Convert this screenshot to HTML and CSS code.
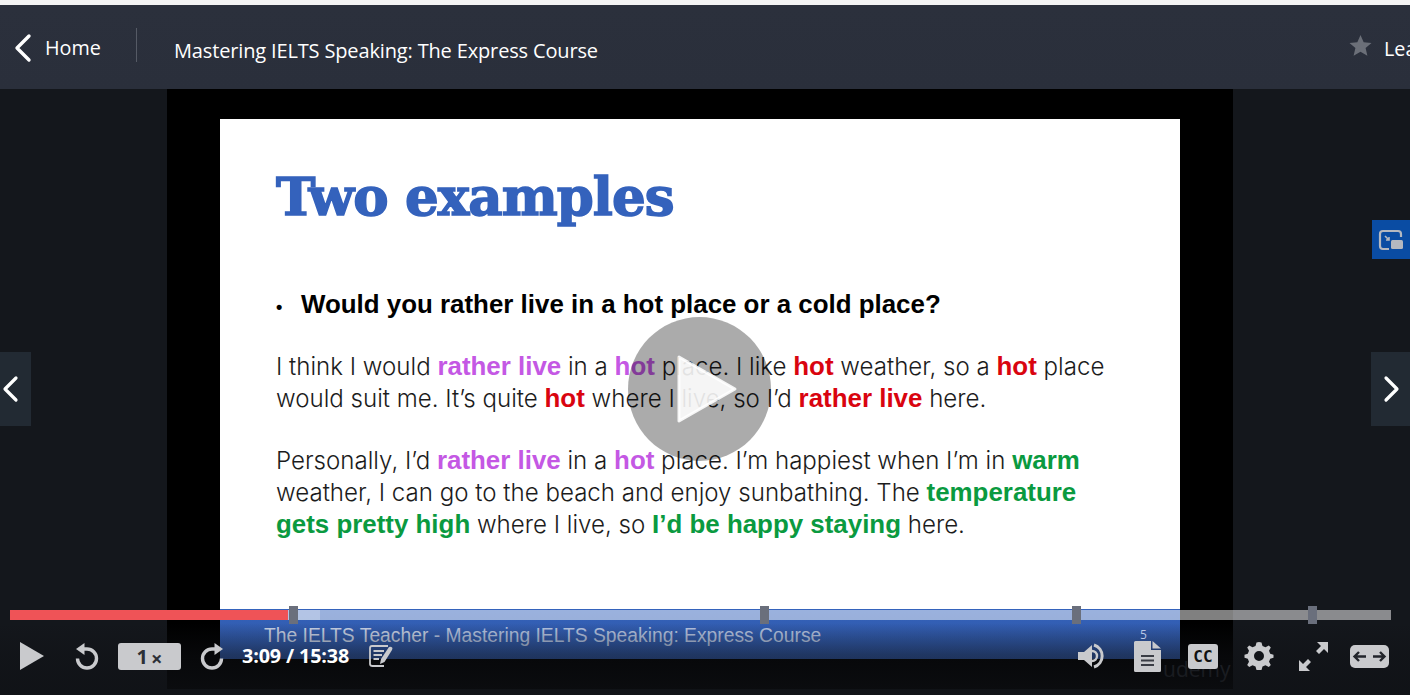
FILE: index.html
```html
<!DOCTYPE html>
<html lang="en">
<head>
    <meta charset="UTF-8">
    <meta name="viewport" content="width=device-width, initial-scale=1.0">
    <title>Mastering IELTS Speaking: The Express Course</title>
    <link rel="stylesheet" href="styles.css">
</head>
<body>

    <div class="top-strip"></div>

    <div class="header">
        <a class="home-link">
            <svg class="back-icon" width="20" height="30" viewBox="0 0 20 30"><path d="M16 3 L4 15 L16 27" fill="none" stroke="#fff" stroke-width="3.4" stroke-linecap="round" stroke-linejoin="round"/></svg>
            <span>Home</span>
        </a>
        <div class="divider"></div>
        <div class="course-title">Mastering IELTS Speaking: The Express Course</div>
        <div class="header-right">
            <svg class="star-icon" width="23" height="23" viewBox="0 0 24 24"><path d="M12 1 L15.3 8.6 L23.5 9.3 L17.3 14.7 L19.2 22.8 L12 18.5 L4.8 22.8 L6.7 14.7 L0.5 9.3 L8.700 8.6 Z" fill="#6b6f78"/></svg>
            <span class="leave-text">Lea</span>
        </div>
    </div>

    <div class="player">
        <div class="video">
            <div class="slide">
                <div class="slide-body">
                    <h1 class="slide-title">Two examples</h1>
                    <p class="question"><span class="dot">•</span>Would you rather live in a hot place or a cold place?</p>
                    <p class="para">
                        <span class="line">I think I would <b class="purple">rather live</b> in a <b class="purple">hot</b> place. I like <b class="red">hot</b> weather, so a <b class="red">hot</b> place</span>
                        <span class="line">would suit me. It’s quite <b class="red">hot</b> where I live, so I’d <b class="red">rather live</b> here.</span>
                    </p>
                    <p class="para para-second">
                        <span class="line">Personally, I’d <b class="purple">rather live</b> in a <b class="purple">hot</b> place. I’m happiest when I’m in <b class="green">warm</b></span>
                        <span class="line">weather, I can go to the beach and enjoy sunbathing. The <b class="green">temperature</b></span>
                        <span class="line"><b class="green">gets pretty high</b> where I live, so <b class="green">I’d be happy staying</b> here.</span>
                    </p>
                </div>
                <div class="slide-footer">The IELTS Teacher <span class="footer-dim">- Mastering IELTS Speaking: Express Course</span></div>
            </div>
        </div>

        <div class="big-play">
            <svg width="62" height="70" viewBox="0 0 62 70"><path d="M3 3 L59 35 L3 67 Z" fill="#fff" fill-opacity="0.88" stroke="#fff" stroke-opacity="0.88" stroke-width="3" stroke-linejoin="round"/></svg>
        </div>

        <div class="side-nav side-prev">
            <svg width="20" height="30" viewBox="0 0 20 30"><path d="M16 4 L5 15 L16 26" fill="none" stroke="#fff" stroke-width="3.2" stroke-linecap="round" stroke-linejoin="round"/></svg>
        </div>
        <div class="side-nav side-next">
            <svg width="20" height="30" viewBox="0 0 20 30"><path d="M5 4 L16 15 L5 26" fill="none" stroke="#fff" stroke-width="3.2" stroke-linecap="round" stroke-linejoin="round"/></svg>
        </div>

        <div class="pip-btn">
            <svg width="26" height="22" viewBox="0 0 26 22"><path d="M11 20 H5 Q2 20 2 17 V5 Q2 2 5 2 H20 Q23 2 23 5 V8" fill="none" stroke="#b4b8c0" stroke-width="2.2"/><path d="M7 7 L11 11 M11 8 V11 H8" fill="none" stroke="#b4b8c0" stroke-width="1.6"/><rect x="13" y="11" width="12" height="9" rx="1.5" fill="#b4b8c0"/></svg>
        </div>

        <div class="watermark">udemy</div>

        <div class="controls">
            <div class="progress">
                <div class="progress-played"></div>
                <div class="progress-buffered"></div>
                <div class="marker marker-1"></div>
                <div class="marker marker-2"></div>
                <div class="marker marker-3"></div>
                <div class="marker marker-4"></div>
            </div>
            <div class="control-row">
                <div class="control-group">
                    <svg class="play-icon" width="24" height="28" viewBox="0 0 24 28"><path d="M0 0 L24 14 L0 28 Z" fill="#c9cacd"/></svg>
                    <svg class="rewind-icon" width="26" height="28" viewBox="0 0 26 28"><path d="M8 7 H13 A9.5 9.5 0 1 1 3.5 16.5" fill="none" stroke="#c9cacd" stroke-width="3.4"/><path d="M10.5 1 V13 L2 7 Z" fill="#c9cacd"/></svg>
                    <div class="speed-box"><b>1</b><span class="speed-x">×</span></div>
                    <svg class="forward-icon" width="26" height="28" viewBox="0 0 26 28"><path d="M18 7 H13 A9.5 9.5 0 1 0 22.5 16.5" fill="none" stroke="#c9cacd" stroke-width="3.4"/><path d="M15.5 1 V13 L24 7 Z" fill="#c9cacd"/></svg>
                    <span class="time">3:09 / 15:38</span>
                    <svg class="notes-icon" width="24" height="24" viewBox="0 0 24 24"><path d="M15 22 H3.5 Q1 22 1 20 V4 Q1 2 3 2 H19" fill="none" stroke="#c9cacd" stroke-width="1.8"/><path d="M4.5 7 H15 M4.5 11 H13 M4.5 15 H10" stroke="#c9cacd" stroke-width="2"/><path d="M11 20 L12 15 L20 3 Q22 2 23.5 4 L23 6 L15.5 18 Z" fill="#c9cacd"/></svg>
                </div>
                <div class="control-group control-group-right">
                    <svg class="volume-icon" width="29" height="26" viewBox="0 0 29 26"><path d="M0 9 H6 L14 2 V24 L6 17 H0 Z" fill="#c9cacd"/><path d="M14 8 A5 5 0 0 1 14 18" fill="none" stroke="#c9cacd" stroke-width="2.4"/><path d="M16 2 A11.5 11.5 0 0 1 16 24" fill="none" stroke="#c9cacd" stroke-width="3"/></svg>
                    <div class="doc-wrap">
                        <span class="doc-count">5</span>
                        <svg width="27" height="31" viewBox="0 0 27 31"><path d="M1.5 0 H17 V9 H27 V29.5 Q27 31 25.5 31 H1.5 Q0 31 0 29.5 V1.5 Q0 0 1.5 0 Z M18.5 0 L27 7.5 H18.5 Z" fill="#c9cacd"/><path d="M7 15 H20 M7 19.5 H20 M7 24 H20" stroke="#3a3d45" stroke-width="2"/></svg>
                    </div>
                    <div class="cc-box">CC</div>
                    <svg class="gear-icon" width="30" height="30" viewBox="0 0 30 30"><path d="M15 1 L17.5 1.5 L18.5 5 L21.5 6.3 L24.8 4.5 L26.8 6.6 L25 9.8 L26.2 12.7 L29.5 13.7 V16.8 L26.2 17.8 L25 20.7 L26.8 23.9 L24.8 26 L21.5 24.2 L18.5 25.5 L17.5 29 H12.5 L11.5 25.5 L8.5 24.2 L5.2 26 L3.2 23.900 L5 20.7 L3.8 17.8 L0.5 16.8 V13.7 L3.8 12.7 L5 9.8 L3.2 6.6 L5.2 4.5 L8.5 6.3 L11.5 5 L12.5 1.5 Z M15 10 A5 5 0 1 0 15 20 A5 5 0 1 0 15 10 Z" fill="#c9cacd" fill-rule="evenodd"/></svg>
                    <svg class="expand-icon" width="31" height="31" viewBox="0 0 31 31"><path d="M19 1 H30 V12 L26 8 L21 13 L18 10 L23 5 Z M12 30 H1 V19 L5 23 L10 18 L13 21 L8 26 Z" fill="#c9cacd"/></svg>
                    <svg class="wide-icon" width="39" height="23" viewBox="0 0 39 23"><rect width="39" height="23" rx="5" fill="#c9cacd"/><path d="M16 11.5 H5 M9 7 L4.5 11.5 L9 16 M23 11.5 H34 M30 7 L34.5 11.5 L30 16" fill="none" stroke="#22252b" stroke-width="2.4"/></svg>
                </div>
            </div>
        </div>
    </div>

</body>
</html>
```

FILE: styles.css
```css
* {
    box-sizing: border-box;
}
html, body {
    height: 100%;
}
body {
    margin: 0;
    display: flex;
    flex-direction: column;
    overflow: hidden;
    background: #14171c;
    font-family: "Open Sans", "Noto Sans", Arial, sans-serif;
    color: #fff;
}
.top-strip {
    height: 5px;
    background: #f4f4f4;
    flex-shrink: 0;
}

/* header */
.header {
    height: 84px;
    flex-shrink: 0;
    display: flex;
    align-items: center;
    background: linear-gradient(#2b303c, #2a2f3b);
    overflow: hidden;
}
.home-link {
    display: flex;
    align-items: center;
    width: 136px;
    padding-left: 13px;
    font-size: 19.8px;
    margin-top: 1px;
}
.back-icon {
    margin-right: 12px;
}
.divider {
    width: 1px;
    height: 34px;
    background: #555a65;
    margin-top: -4px;
}
.course-title {
    margin-left: 37px;
    font-size: 20px;
    letter-spacing: -0.15px;
    margin-top: 7px;
    white-space: nowrap;
}
.header-right {
    margin-left: auto;
    display: flex;
    align-items: center;
    width: 61px;
    flex-shrink: 0;
    margin-top: 3px;
    white-space: nowrap;
}
.star-icon {
    flex-shrink: 0;
    margin-top: -6px;
}
.leave-text {
    margin-left: 12px;
    font-size: 19.8px;
}

/* player */
.player {
    position: relative;
    flex: 1;
    background: #14171c;
}
.video {
    margin-left: 167px;
    width: 1066px;
    height: 600px;
    background: #000;
    padding-top: 30px;
    display: flex;
    justify-content: center;
}
.slide {
    width: 960px;
    height: 540px;
    background: #fff;
    display: flex;
    flex-direction: column;
}
.slide-body {
    flex: 1;
    padding: 44px 0 0 56px;
    font-family: "Inter", "Liberation Sans", Arial, sans-serif;
    font-weight: 300;
    font-size: 24.1px;
    line-height: 32px;
    color: #1c1c1c;
    white-space: nowrap;
}
.slide-body b {
    font-family: "Liberation Sans", Arial, sans-serif;
    font-weight: bold;
    font-size: 25.9px;
}
.slide-title {
    margin: 0;
    font-family: "DejaVu Serif", serif;
    font-weight: bold;
    font-size: 53px;
    line-height: 66px;
    letter-spacing: -1px;
    color: #3462bc;
    -webkit-text-stroke: 1.5px #3462bc;
}
.question {
    margin: 59px 0 0;
    font-family: "Liberation Sans", Arial, sans-serif;
    font-size: 25.9px;
    font-weight: bold;
    color: #000;
}
.dot {
    display: inline-block;
    width: 25px;
    font-size: 18px;
}
.para {
    margin: 27px 0 0;
}
.para-second {
    margin-top: 30px;
}
.line {
    display: block;
    height: 32px;
}
.purple {
    color: #c458e4;
}
.red {
    color: #d9040f;
}
.green {
    color: #0a9a40;
}
.slide-footer {
    height: 50px;
    background: linear-gradient(#3563bc, #2d54a0);
    padding: 11px 0 0 44px;
    font-family: "Liberation Sans", Arial, sans-serif;
    font-size: 19.3px;
    line-height: 32px;
    color: #ccd6ea;
    white-space: nowrap;
}
.footer-dim {
    color: #b9c8e6;
}

.big-play {
    position: absolute;
    left: 628px;
    top: 228px;
    width: 143px;
    height: 144px;
    border-radius: 50%;
    background: rgba(0, 0, 0, 0.33);
    display: flex;
    align-items: center;
    justify-content: center;
    padding-left: 15px;
}
.side-nav {
    position: absolute;
    top: 263px;
    height: 74px;
    background: #222a33;
    display: flex;
    align-items: center;
}
.side-prev {
    left: 0;
    width: 31px;
}
.side-next {
    right: 0;
    width: 39px;
    justify-content: center;
}
.pip-btn {
    position: absolute;
    right: 0;
    top: 131px;
    width: 38px;
    height: 39px;
    background: #0a4ca3;
    display: flex;
    align-items: center;
    justify-content: center;
}
.watermark {
    position: absolute;
    left: 1163px;
    top: 566px;
    font-size: 21px;
    line-height: 28px;
    color: #2a2d33;
}

/* controls over the video */
.controls {
    position: absolute;
    left: 0;
    right: 0;
    top: 516px;
    bottom: 0;
    background: linear-gradient(rgba(0, 0, 0, 0) 20%, rgba(15, 17, 21, 0.45) 55%, rgba(15, 17, 21, 0.75));
    padding: 0 19px 0 10px;
}
.progress {
    position: relative;
    height: 10px;
    margin-top: 5px;
    background: rgba(255, 255, 255, 0.5);
}
.progress-played {
    position: absolute;
    left: 0;
    top: 0;
    bottom: 0;
    width: 278px;
    background: #ef5357;
}
.progress-buffered {
    position: absolute;
    left: 278px;
    top: 0;
    bottom: 0;
    width: 32px;
    background: rgba(255, 255, 255, 0.25);
}
.marker {
    position: absolute;
    top: -4px;
    width: 9px;
    height: 18px;
    background: #6a6f7c;
}
.marker-1 { left: 279px; }
.marker-2 { left: 750px; }
.marker-3 { left: 1062px; }
.marker-4 { left: 1298px; }

.control-row {
    display: flex;
    justify-content: space-between;
    align-items: center;
    margin-top: 21px;
    margin-right: 2px;
    height: 30px;
}
.control-group {
    display: flex;
    align-items: center;
}
.play-icon {
    margin-left: 10px;
}
.rewind-icon {
    margin-left: 30px;
}
.speed-box {
    margin-left: 18px;
    width: 63px;
    height: 27px;
    border-radius: 3px;
    background: #c9cacd;
    color: #2d3036;
    font-size: 20px;
    display: flex;
    align-items: center;
    justify-content: center;
    gap: 3px;
}
.speed-x {
    font-size: 20px;
    font-weight: bold;
    margin-top: 4px;
}
.forward-icon {
    margin-left: 18px;
}
.time {
    margin-left: 17px;
    margin-top: -2px;
    font-size: 19.7px;
    font-weight: bold;
    letter-spacing: -0.1px;
}
.notes-icon {
    margin-left: 20px;
}
.doc-wrap {
    position: relative;
    margin-left: 27px;
    display: flex;
}
.doc-count {
    position: absolute;
    top: -15px;
    left: 6px;
    font-size: 12px;
    color: #b9c8e6;
}
.cc-box {
    margin-left: 27px;
    width: 30px;
    height: 25px;
    border-radius: 3px;
    background: #c9cacd;
    color: #111;
    font-size: 16px;
    font-weight: bold;
    text-align: center;
    line-height: 25px;
    font-family: "DejaVu Sans Mono", monospace;
}
.gear-icon {
    margin-left: 26px;
}
.expand-icon {
    margin-left: 24px;
}
.wide-icon {
    margin-left: 21px;
}
```
